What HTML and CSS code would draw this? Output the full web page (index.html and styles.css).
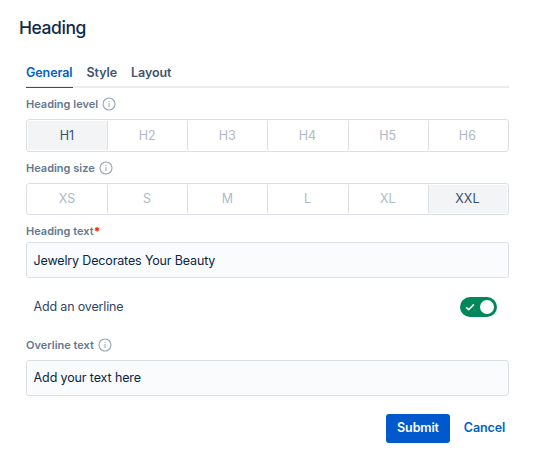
FILE: index.html
```html
<!DOCTYPE html>
<html lang="en">
<head>
<meta charset="utf-8">
<title>Heading</title>
<link rel="stylesheet" href="styles.css">
</head>
<body>
<svg class="defs" aria-hidden="true">
  <symbol id="info" viewBox="0 0 14 14">
    <circle cx="7" cy="7" r="6" fill="none" stroke="currentColor" stroke-width="1.1"/>
    <path d="M7 6.1v4" fill="none" stroke="currentColor"/>
    <circle cx="7" cy="4.3" r=".65" fill="currentColor"/>
  </symbol>
</svg>
<main class="dialog">
  <h1 class="title">Heading</h1>
  <div class="body">
    <nav class="tabs">
      <a class="tab active">General</a>
      <a class="tab">Style</a>
      <a class="tab">Layout</a>
    </nav>
    <div class="label"><span>Heading level</span><svg class="info"><use href="#info"/></svg></div>
    <div class="segments levels">
      <span class="segment selected">H1</span><span class="segment">H2</span><span class="segment">H3</span><span class="segment">H4</span><span class="segment">H5</span><span class="segment">H6</span>
    </div>
    <div class="label"><span>Heading size</span><svg class="info"><use href="#info"/></svg></div>
    <div class="segments sizes">
      <span class="segment">XS</span><span class="segment">S</span><span class="segment">M</span><span class="segment">L</span><span class="segment">XL</span><span class="segment selected">XXL</span>
    </div>
    <div class="label text-label"><span>Heading text<b class="required">*</b></span></div>
    <div class="field">Jewelry Decorates Your Beauty</div>
    <div class="toggle-row">
      <span class="toggle-text">Add an overline</span>
      <span class="toggle">
        <svg class="check" viewBox="0 0 10 8"><path d="M1.2 4.3 3.7 6.7 8.8 1.4" fill="none" stroke="#fff" stroke-width="1.6"/></svg>
        <span class="knob"></span>
      </span>
    </div>
    <div class="label overline-label"><span>Overline text</span><svg class="info"><use href="#info"/></svg></div>
    <div class="field last-field">Add your text here</div>
    <div class="actions">
      <button class="submit">Submit</button>
      <button class="cancel">Cancel</button>
    </div>
  </div>
</main>
</body>
</html>
```
FILE: styles.css
```css
* { box-sizing: border-box; }
body {
  margin: 0;
  background: #fff;
  color: #2f4668;
  font-family: Inter, "Liberation Sans", sans-serif;
  font-size: 12.5px;
}
.defs { display: block; width: 0; height: 0; }
.dialog { padding: 16px 26px 0; }
.title {
  margin: 0 0 0 -7px;
  height: 24px;
  font-size: 17.5px;
  line-height: 24px;
  font-weight: 500;
  letter-spacing: -0.45px;
  color: #0f2b4d;
}
.tabs {
  display: flex;
  gap: 14px;
  margin-top: 22px;
  height: 26px;
  border-bottom: 2px solid #ebecf0;
  line-height: 21px;
  font-weight: 600;
  letter-spacing: -0.08px;
  color: #3f5470;
}
.tab { height: 26px; }
.active {
  color: #005fcc;
  border-bottom: 1px solid #0059cc;
}
.label {
  display: flex;
  align-items: center;
  gap: 4px;
  height: 31px;
  font-size: 11px;
  font-weight: 600;
  color: #66788f;
}
.info { width: 14px; height: 14px; color: #98a4b5; }
.required { color: #ff2b0b; }
.segments {
  display: grid;
  grid-template-columns: 79fr repeat(4, 80.2fr) 79.2fr;
  height: 33px;
  padding: 1px;
  border: 1px solid #dcdfe5;
  border-radius: 3px;
}
.sizes { height: 32px; }
.segment {
  display: flex;
  align-items: center;
  justify-content: center;
  padding: 0 1px 1px 0;
  color: #b0b9c5;
}
.segment + .segment { border-left: 1px solid #dcdfe5; }
.segment.selected { background: #f3f4f6; color: #364f70; }
.text-label { height: 27px; padding-top: 5px; }
.field {
  display: flex;
  align-items: center;
  height: 36px;
  padding: 0 6.6px;
  border: 1px solid #dcdfe5;
  border-radius: 3px;
  background: #fafbfd;
  color: #09264a;
  letter-spacing: -0.15px;
}
.last-field { padding-bottom: 1px; letter-spacing: -0.12px; }
.toggle-row {
  display: flex;
  align-items: center;
  justify-content: space-between;
  height: 52px;
  padding: 6px 12px 0 7.6px;
}
.toggle-text { letter-spacing: -0.17px; padding-bottom: 1px; }
.toggle {
  display: flex;
  align-items: center;
  justify-content: space-between;
  width: 37px;
  height: 20px;
  padding: 0 3px 0 5px;
  border-radius: 10px;
  background: #00875a;
}
.check { width: 10px; height: 8px; }
.knob { width: 14px; height: 14px; border-radius: 50%; background: #fff; }
.overline-label { height: 30px; }
.actions {
  display: flex;
  justify-content: flex-end;
  gap: 7px;
  margin-top: 18px;
}
.actions button {
  height: 29px;
  padding: 0 0 2px;
  border: 0;
  border-radius: 3px;
  font: 600 12.5px Inter, "Liberation Sans", sans-serif;
  letter-spacing: -0.12px;
}
.actions .submit { width: 64px; background: #0059cc; color: #fff; }
.actions .cancel { width: 55px; margin-right: -3px; background: none; color: #005fcc; }
```
